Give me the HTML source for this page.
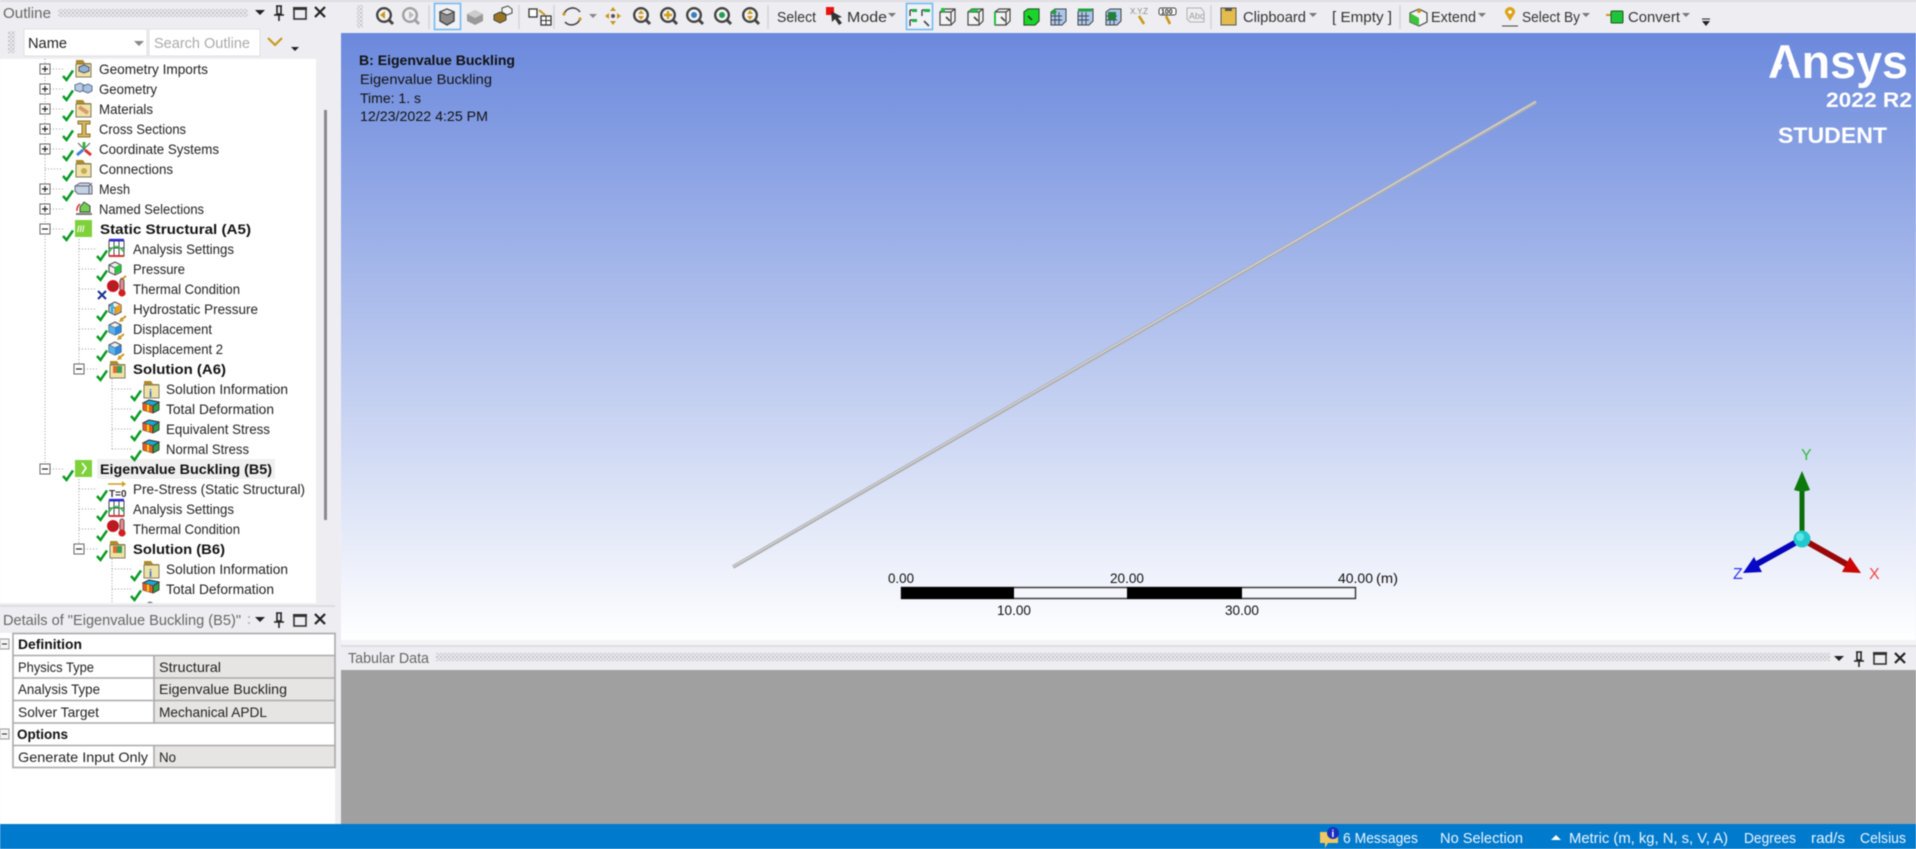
<!DOCTYPE html>
<html lang="en"><head><meta charset="utf-8"><title>Ansys Mechanical</title>
<style>
html,body{margin:0;padding:0;width:1916px;height:849px;overflow:hidden;background:#eeeef2}
svg{display:block;filter:blur(.5px)}
text{font-family:"Liberation Sans",sans-serif;font-size:14px;fill:#222}
.b{font-weight:bold;fill:#111}
.t{fill:#666;font-size:15px}
.v{fill:#111}
.s{fill:#eaf4fc;font-size:15px}
</style></head><body>
<svg width="1916" height="849" viewBox="0 0 1916 849" xmlns="http://www.w3.org/2000/svg">
<defs>
<linearGradient id="vp" x1="0" y1="0" x2="0" y2="1"><stop offset="0" stop-color="#6b89dd"/><stop offset="1" stop-color="#ffffff"/></linearGradient>
<pattern id="dots" width="4" height="4" patternUnits="userSpaceOnUse"><rect width="2" height="2" fill="#c4c4c8"/><rect x="2" y="2" width="2" height="2" fill="#d0d0d4"/></pattern>
<g id="chk"><path d="M0 6 L3.5 10 L10 0.5" fill="none" stroke="#0b9a24" stroke-width="2.5"/></g>
<g id="xx"><path d="M0 1 L8 9 M8 1 L0 9" stroke="#1a2f8f" stroke-width="2"/></g>
<g id="pl"><rect x="-5" y="-5" width="10" height="10" fill="#fff" stroke="#666"/><path d="M-3 0H3M0 -3V3" stroke="#222" stroke-width="1.2"/></g>
<g id="mn"><rect x="-5" y="-5" width="10" height="10" fill="#fff" stroke="#666"/><path d="M-3 0H3" stroke="#222" stroke-width="1.2"/></g>
<g id="fold"><path d="M1 -9H8L10 -6H16V-3H1Z" fill="#b08a28"/><rect x="1" y="-5" width="15" height="13" fill="#f0e2a4" stroke="#7f7a63"/></g>
<g id="cube"><path d="M9 -7L15 -4V3L9 6L3 3V-4Z" fill="#f0f0f0" stroke="#555" stroke-width="1.2"/><path d="M3 -4L9 -1L15 -4M9 -1V6" fill="none" stroke="#555"/></g>
<g id="cubeb"><path d="M1 -7 L6 -9 L10 -7 L10 -2 L6 0 L1 -2Z" fill="#b9cbe4" stroke="#5a6f90"/><path d="M9 -6 L14 -8 L18 -6 L18 -1 L14 1 L9 -1Z" fill="#a9c0e0" stroke="#5a6f90"/></g>
<g id="res"><path d="M1 -5 L7 -8 L17 -6 L17 2 L11 5 L1 2Z" fill="#2aa14a" stroke="#444"/><path d="M1 -5L11 -2L17 -6 L7 -8Z" fill="#18a8d8" stroke="#333"/><path d="M1 -5 L11 -2 L11 5 L1 2Z" fill="#e85a1c"/><path d="M6 -3.500V3.500" stroke="#f0d020" stroke-width="2"/><path d="M11 -2V5" stroke="#333"/></g>
<g id="as"><path d="M1 -8H16V7H1Z" fill="#fff" stroke="#444"/><path d="M6 -8V7M11 -8V7M1 -1H16" stroke="#444"/><path d="M1 -9H16" stroke="#2a2ae0" stroke-width="2.4"/><path d="M1 7H16" stroke="#e03030" stroke-width="2"/><path d="M1 3Q8 -8 16 3" fill="none" stroke="#2dbe4a" stroke-width="1.6"/></g>
<g id="th"><circle cx="6" cy="-2" r="6" fill="#cc1122"/><path d="M3 -5L6 -2L9 -5M6 -2V2" stroke="#551" stroke-width=".8" fill="none"/><rect x="13" y="-9" width="4" height="12" rx="2" fill="#e88" stroke="#555"/><circle cx="15" cy="5" r="3.6" fill="#d02020"/></g>
<g id="sm"><path d="M0 4L5 0" stroke="#c89a2a" stroke-width="2"/><path d="M-2 6L3 5L0 1Z" fill="#c89a2a"/></g>
<g id="mag"><path d="M4 4L9 9" stroke="#444" stroke-width="3"/><circle cx="0" cy="0" r="6.800" fill="#f4f4f4" stroke="#444" stroke-width="2.400"/></g>
<g id="tri"><path d="M-4 -2H4L0 2Z" fill="#777"/></g>
<g id="tb"><path d="M-7 -5L-3 -8H8V4L4 8H-7Z" fill="#f4f4f4" stroke="#444" stroke-width="1.2"/><path d="M-7 -5H4V8M4 -5L8 -8" fill="none" stroke="#444" stroke-width="1.2"/><path d="M-1 0L3 4" stroke="#444" stroke-width="1.6"/></g>
<g id="gr"><path d="M-7 -5L-3 -8H8V4L4 8H-7Z" fill="#a9c7ea" stroke="#444"/><path d="M-3 -5V8M1 -5V8M-7 -1H4M-7 3H4" stroke="#445" stroke-width=".9"/></g>
</defs>

<!-- base -->
<rect width="1916" height="849" fill="#eeeef2"/>
<rect y="0" width="1916" height="2" fill="#dcdce2"/>
<!-- viewport -->
<rect x="341" y="33" width="1575" height="607" fill="url(#vp)"/>
<!-- tree -->
<rect x="0" y="59" width="316" height="544" fill="#fff"/>
<rect x="316" y="59" width="19" height="544" fill="#eeeef2"/>
<rect x="324" y="110" width="3" height="410" fill="#8a8a8a"/>
<rect x="97" y="459" width="178" height="20" fill="#f0f0f0"/>

<!-- outline title -->
<text class="t" x="3" y="18" textLength="48" lengthAdjust="spacingAndGlyphs">Outline</text>
<rect x="58" y="9" width="190" height="8" fill="url(#dots)"/>
<path d="M255 10H265L260 15Z" fill="#222"/>
<path d="M276 6H282M277 6V14H281V6M274 15H284M279 15V21" fill="none" stroke="#222" stroke-width="1.6"/>
<rect x="294" y="8" width="12" height="11" fill="none" stroke="#333" stroke-width="1.6"/><rect x="293" y="7" width="14" height="3" fill="#333"/>
<path d="M315 7L325 17M325 7L315 17" stroke="#222" stroke-width="2.2"/>
<rect x="8" y="31" width="7" height="22" fill="url(#dots)"/>
<rect x="24" y="29" width="123" height="27" fill="#fff" stroke="#e0e0e4"/>
<text x="28" y="48" style="font-size:15px" textLength="39" lengthAdjust="spacingAndGlyphs">Name</text>
<path d="M134 41H144L139 46Z" fill="#888"/>
<rect x="149" y="29" width="111" height="27" fill="#fff" stroke="#e0e0e4"/>
<text x="154" y="48" style="font-size:15px;fill:#aaa" textLength="96" lengthAdjust="spacingAndGlyphs">Search Outline</text>
<path d="M268 38L275 45L282 38" fill="none" stroke="#c99a1c" stroke-width="2.2"/>
<path d="M291 47H299L295 51Z" fill="#222"/>

<!-- tree lines -->
<g stroke="#999" stroke-dasharray="1 2" fill="none">
<path d="M45 59V464M79 230V364M112 379V449M79 479V544M112 559V603"/>
<path d="M50 69H63M50 89H63M50 109H63M50 129H63M50 149H63M45 169H63M50 189H63M50 209H63M50 229H63M50 469H63"/>
<path d="M79 249H97M79 269H97M79 289H97M79 309H97M79 329H97M79 349H97M84 369H97M112 389H131M112 409H131M112 429H131M112 449H131"/>
<path d="M79 489H97M79 509H97M79 529H97M84 549H97M112 569H131M112 589H131"/>
</g>
<g>
<use href="#pl" x="45" y="69"/><use href="#pl" x="45" y="89"/><use href="#pl" x="45" y="109"/><use href="#pl" x="45" y="129"/><use href="#pl" x="45" y="149"/><use href="#pl" x="45" y="189"/><use href="#pl" x="45" y="209"/>
<use href="#mn" x="45" y="229"/><use href="#mn" x="79" y="369"/><use href="#mn" x="45" y="469"/><use href="#mn" x="79" y="549"/>
<use href="#chk" x="63" y="70"/><use href="#chk" x="63" y="90"/><use href="#chk" x="63" y="110"/><use href="#chk" x="63" y="130"/><use href="#chk" x="63" y="150"/><use href="#chk" x="63" y="170"/><use href="#chk" x="63" y="190"/><use href="#chk" x="63" y="230"/><use href="#chk" x="63" y="470"/>
<use href="#chk" x="97" y="250"/><use href="#chk" x="97" y="270"/><use href="#xx" x="98" y="290"/><use href="#chk" x="97" y="310"/><use href="#chk" x="97" y="330"/><use href="#chk" x="97" y="350"/><use href="#chk" x="97" y="370"/>
<use href="#chk" x="131" y="390"/><use href="#chk" x="131" y="410"/><use href="#chk" x="131" y="430"/><use href="#chk" x="131" y="450"/>
<use href="#chk" x="97" y="490"/><use href="#chk" x="97" y="510"/><use href="#chk" x="97" y="530"/><use href="#chk" x="97" y="550"/><use href="#chk" x="131" y="570"/><use href="#chk" x="131" y="590"/>
</g>
<!-- tree icons -->
<use href="#fold" x="75" y="69"/><path d="M79 67L84 65L89 67V71L84 73L79 71Z" fill="#8fb0d8" stroke="#556"/>
<use href="#cubeb" x="74" y="92"/>
<use href="#fold" x="75" y="109"/><path d="M79 107L88 113" stroke="#d99a6a" stroke-width="4"/>
<path d="M78 121H90V124H86V134H90V137H78V134H82V124H78Z" fill="#d8b656" stroke="#8a7434"/>
<path d="M78 143L90 155M90 143L78 155" stroke="#555"/><path d="M84 142V148" stroke="#2bbd3c" stroke-width="3"/><path d="M83 150L77 155" stroke="#3a7fe0" stroke-width="3"/><path d="M85 150L91 155" stroke="#e03030" stroke-width="3"/>
<use href="#fold" x="75" y="169"/><circle cx="84" cy="171" r="3" fill="#c9a94e"/>
<path d="M75 186L80 183H89L92 186V194H78L75 191Z" fill="#c3d1e4" stroke="#667"/><path d="M75 186H89L92 183M89 186V194" fill="none" stroke="#667"/>
<path d="M84 202L90 206V212H80V207Z" fill="#6fd052" stroke="#444"/><path d="M76 214H92" stroke="#777" stroke-width="2"/><path d="M80 204A8 8 0 0 0 77 211" stroke="#e03030" fill="none" stroke-width="1.5"/>
<rect x="75" y="220" width="17" height="17" fill="#7ed13b"/><text x="77" y="232" style="font-size:9px;fill:#fff;font-weight:bold">///</text>
<use href="#as" x="108" y="249"/>
<use href="#cube" x="106" y="269"/><path d="M115 267L121 264V271L115 274Z" fill="#23c43e"/><use href="#sm" x="121" y="276"/>
<use href="#th" x="107" y="288"/>
<use href="#cube" x="106" y="309"/><path d="M115 307L121 304V311L115 314Z" fill="#e8a020"/><path d="M112 304V313" stroke="#3fb0e0" stroke-width="3"/><use href="#sm" x="121" y="316"/>
<use href="#cube" x="106" y="329"/><path d="M109 325L115 328V335L109 332Z" fill="#5db0ea"/><path d="M115 328L121 325V332L115 335Z" fill="#2a8be0"/><use href="#sm" x="119" y="334"/>
<use href="#cube" x="106" y="349"/><path d="M109 345L115 348V355L109 352Z" fill="#5db0ea"/><path d="M115 348L121 345V352L115 355Z" fill="#2a8be0"/><use href="#sm" x="119" y="354"/>
<use href="#fold" x="109" y="370"/><rect x="113" y="366" width="9" height="7" fill="#35a05a"/><rect x="113" y="366" width="4" height="7" fill="#e06a2a"/>
<use href="#fold" x="143" y="390"/><text x="149" y="397" style="font-size:11px;fill:#2a6fd0;font-weight:bold">i</text>
<use href="#res" x="142" y="408"/><use href="#res" x="142" y="428"/><use href="#res" x="142" y="448"/>
<rect x="75" y="460" width="17" height="17" fill="#7ed13b"/><path d="M82 463L86 468L82 474" fill="none" stroke="#fff" stroke-width="1.6"/>
<path d="M108 484H125" stroke="#c9a020" stroke-width="1.6"/><path d="M122 481L126 484L122 487Z" fill="#c9a020"/><text x="109" y="497" style="font-size:10px;font-weight:bold;fill:#333">T=0</text>
<use href="#as" x="108" y="509"/>
<use href="#th" x="107" y="528"/>
<use href="#fold" x="109" y="550"/><rect x="113" y="546" width="9" height="7" fill="#35a05a"/><rect x="113" y="546" width="4" height="7" fill="#e06a2a"/>
<use href="#fold" x="143" y="570"/><text x="149" y="577" style="font-size:11px;fill:#2a6fd0;font-weight:bold">i</text>
<use href="#res" x="142" y="588"/>
<path d="M147 603Q150 600 153 603Z" fill="#777"/>

<!-- tree text -->
<text x="99" y="74" textLength="109" lengthAdjust="spacingAndGlyphs">Geometry Imports</text>
<text x="99" y="94" textLength="58" lengthAdjust="spacingAndGlyphs">Geometry</text>
<text x="99" y="114" textLength="54" lengthAdjust="spacingAndGlyphs">Materials</text>
<text x="99" y="134" textLength="87" lengthAdjust="spacingAndGlyphs">Cross Sections</text>
<text x="99" y="154" textLength="120" lengthAdjust="spacingAndGlyphs">Coordinate Systems</text>
<text x="99" y="174" textLength="74" lengthAdjust="spacingAndGlyphs">Connections</text>
<text x="99" y="194" textLength="31" lengthAdjust="spacingAndGlyphs">Mesh</text>
<text x="99" y="214" textLength="105" lengthAdjust="spacingAndGlyphs">Named Selections</text>
<text class="b" x="100" y="234" textLength="151" lengthAdjust="spacingAndGlyphs">Static Structural (A5)</text>
<text x="133" y="254" textLength="101" lengthAdjust="spacingAndGlyphs">Analysis Settings</text>
<text x="133" y="274" textLength="52" lengthAdjust="spacingAndGlyphs">Pressure</text>
<text x="133" y="294" textLength="107" lengthAdjust="spacingAndGlyphs">Thermal Condition</text>
<text x="133" y="314" textLength="125" lengthAdjust="spacingAndGlyphs">Hydrostatic Pressure</text>
<text x="133" y="334" textLength="79" lengthAdjust="spacingAndGlyphs">Displacement</text>
<text x="133" y="354" textLength="90" lengthAdjust="spacingAndGlyphs">Displacement 2</text>
<text class="b" x="133" y="374" textLength="93" lengthAdjust="spacingAndGlyphs">Solution (A6)</text>
<text x="166" y="394" textLength="122" lengthAdjust="spacingAndGlyphs">Solution Information</text>
<text x="166" y="414" textLength="108" lengthAdjust="spacingAndGlyphs">Total Deformation</text>
<text x="166" y="434" textLength="104" lengthAdjust="spacingAndGlyphs">Equivalent Stress</text>
<text x="166" y="454" textLength="83" lengthAdjust="spacingAndGlyphs">Normal Stress</text>
<text class="b" x="100" y="474" textLength="172" lengthAdjust="spacingAndGlyphs">Eigenvalue Buckling (B5)</text>
<text x="133" y="494" textLength="172" lengthAdjust="spacingAndGlyphs">Pre-Stress (Static Structural)</text>
<text x="133" y="514" textLength="101" lengthAdjust="spacingAndGlyphs">Analysis Settings</text>
<text x="133" y="534" textLength="107" lengthAdjust="spacingAndGlyphs">Thermal Condition</text>
<text class="b" x="133" y="554" textLength="92" lengthAdjust="spacingAndGlyphs">Solution (B6)</text>
<text x="166" y="574" textLength="122" lengthAdjust="spacingAndGlyphs">Solution Information</text>
<text x="166" y="594" textLength="108" lengthAdjust="spacingAndGlyphs">Total Deformation</text>

<!-- details panel -->
<rect x="0" y="605" width="335" height="2" fill="#dcdce2"/>
<text class="t" x="3" y="625" textLength="238" lengthAdjust="spacingAndGlyphs">Details of "Eigenvalue Buckling (B5)"</text>
<rect x="248" y="616" width="2" height="2" fill="#bbb"/><rect x="248" y="622" width="2" height="2" fill="#bbb"/>
<path d="M255 617H265L260 622Z" fill="#222"/>
<path d="M276 613H282M277 613V621H281V613M274 622H284M279 622V628" fill="none" stroke="#222" stroke-width="1.6"/>
<rect x="294" y="615" width="12" height="11" fill="none" stroke="#333" stroke-width="1.6"/><rect x="293" y="614" width="14" height="3" fill="#333"/>
<path d="M315 614L325 624M325 614L315 624" stroke="#222" stroke-width="2.2"/>
<rect x="0" y="633" width="335" height="191" fill="#fff"/>
<rect x="335" y="633" width="6" height="191" fill="#eeeef2"/>
<rect x="154" y="655" width="181" height="68" fill="#e6e5e3"/>
<rect x="154" y="746" width="181" height="22" fill="#e6e5e3"/>
<g fill="none" stroke="#aaa" stroke-width="1.6">
<rect x="13" y="633.5" width="322" height="134"/>
<path d="M13 655.5H335M13 678H335M13 700.5H335M13 723H335M13 745.5H335M154 655.5V723M154 745.5V768"/>
</g>
<rect x="0" y="639" width="9" height="10" fill="#f4f4f4" stroke="#999"/><path d="M2 644H7" stroke="#222"/>
<rect x="0" y="729" width="9" height="10" fill="#f4f4f4" stroke="#999"/><path d="M2 734H7" stroke="#222"/>
<text class="b" x="18" y="649" textLength="64" lengthAdjust="spacingAndGlyphs">Definition</text>
<text x="18" y="672" textLength="76" lengthAdjust="spacingAndGlyphs">Physics Type</text>
<text x="159" y="672" textLength="62" lengthAdjust="spacingAndGlyphs">Structural</text>
<text x="18" y="694" textLength="82" lengthAdjust="spacingAndGlyphs">Analysis Type</text>
<text x="159" y="694" textLength="128" lengthAdjust="spacingAndGlyphs">Eigenvalue Buckling</text>
<text x="18" y="717" textLength="81" lengthAdjust="spacingAndGlyphs">Solver Target</text>
<text x="159" y="717" textLength="108" lengthAdjust="spacingAndGlyphs">Mechanical APDL</text>
<text class="b" x="17" y="739" textLength="51" lengthAdjust="spacingAndGlyphs">Options</text>
<text x="18" y="762" textLength="130" lengthAdjust="spacingAndGlyphs">Generate Input Only</text>
<text x="159" y="762" textLength="17" lengthAdjust="spacingAndGlyphs">No</text>

<!-- toolbar -->
<rect x="357" y="5" width="6" height="23" fill="url(#dots)"/>
<use href="#mag" x="384" y="15"/><path d="M380 15L385 11V19Z" fill="#c89a1c"/>
<g opacity=".45"><use href="#mag" x="410" y="15"/></g><path d="M414 15L409 11V19Z" fill="#bbb"/>
<path d="M429 5V29M519 5V29M554 5V29M768 5V29M1211 5V29M1400 5V29" stroke="#d4d4d8" stroke-width="1.5"/>
<rect x="434.500" y="3.500" width="26" height="26" fill="#f0f2f6" stroke="#6ab7f5" stroke-width="1.5"/>
<path d="M447 9L454 12V21L447 25L440 21V12Z" fill="#8a8a8a" stroke="#444" stroke-width="1.4"/><path d="M440 12L447 15L454 12L447 9Z" fill="#ddd" stroke="#444"/>
<path d="M475 10L483 14V21L475 25L467 21V14Z" fill="#999"/><path d="M467 14L475 18L483 14L475 10Z" fill="#ccc"/>
<path d="M494 15L500 12L506 15V20L500 23L494 20Z" fill="#9a7420" stroke="#444"/><path d="M502 8L508 6L512 9V13L507 15L502 12Z" fill="#f4f4f4" stroke="#444"/>
<rect x="529" y="9" width="8" height="8" fill="#fff" stroke="#333" stroke-width="1.3"/><path d="M539 10L545 15" stroke="#c89a1c" stroke-width="2"/><rect x="541" y="16" width="10" height="9" fill="#fff" stroke="#333" stroke-width="1.3"/><path d="M546 16V25M541 20.500H551" stroke="#333"/>
<path d="M564 14A9 9 0 0 1 580 12M580 19A9 9 0 0 1 565 22" fill="none" stroke="#444" stroke-width="1.6"/><circle cx="564" cy="14" r="1.6" fill="#c89a1c"/><circle cx="580" cy="19" r="1.6" fill="#c89a1c"/>
<path d="M589 14H597L593 18Z" fill="#888"/>
<path d="M613 7L616 11H610ZM613 25L616 21H610ZM605 16L609 13V19ZM621 16L617 13V19Z" fill="#c8961c"/><circle cx="613" cy="16" r="2" fill="#555"/>
<use href="#mag" x="641" y="15"/><path d="M641 10L644 14H638ZM641 20L644 16H638Z" fill="#d09c1c"/>
<use href="#mag" x="668" y="15"/><path d="M664 15H672M668 11V19" stroke="#d09c1c" stroke-width="2.4"/>
<use href="#mag" x="694" y="15"/><circle cx="694" cy="15" r="3" fill="#3a7fc0"/>
<use href="#mag" x="722" y="15"/><circle cx="722" cy="15" r="3" fill="#22a050"/>
<use href="#mag" x="750" y="15"/><path d="M750 10L753 14H747ZM750 20L753 16H747Z" fill="#d09c1c"/>
<text x="777" y="22" style="font-size:15px;fill:#333" textLength="39" lengthAdjust="spacingAndGlyphs">Select</text>
<rect x="826" y="7" width="8" height="8" fill="#ee1010"/><path d="M831 11L842 17L838 18L842 23L839 25L835 19L832 22Z" fill="#333"/>
<text x="847" y="22" style="font-size:15px;fill:#333" textLength="40" lengthAdjust="spacingAndGlyphs">Mode</text>
<use href="#tri" x="892" y="15"/>
<rect x="906.500" y="3.500" width="26" height="26" fill="#f0f2f6" stroke="#6ab7f5" stroke-width="1.5"/>
<path d="M910 10H917M910 10V16M922 10H929M922 10V16M910 20H917M910 20V26" stroke="#333" stroke-width="1.3" fill="none"/><rect x="912" y="9" width="5" height="3" fill="#22b04a"/><rect x="924" y="9" width="6" height="3" fill="#22b04a"/><rect x="912" y="19" width="5" height="3" fill="#22b04a"/><path d="M924 21L929 26" stroke="#444" stroke-width="1.6"/>
<use href="#tb" x="947" y="17"/><rect x="941" y="8" width="4" height="4" fill="#1fc33c"/>
<use href="#tb" x="975" y="17"/><path d="M968 12L972 9H980L976 12Z" fill="#1fc33c"/>
<use href="#tb" x="1002" y="17"/><path d="M995 12V25" stroke="#1fc33c" stroke-width="2"/>
<use href="#tb" x="1031" y="17"/><path d="M1024 12L1028 9H1039V21L1035 25H1024Z" fill="#19d52a" stroke="#225522"/><path d="M1028 16L1032 20" stroke="#333" stroke-width="1.6"/>
<use href="#gr" x="1058" y="17"/><circle cx="1054" cy="12" r="2.500" fill="#22a040"/>
<use href="#gr" x="1085" y="17"/><path d="M1078 10H1092" stroke="#22a040" stroke-width="3"/>
<use href="#gr" x="1113" y="17"/><rect x="1108" y="12" width="8" height="8" fill="#22803a"/>
<text x="1130" y="14" style="font-size:8px;fill:#888" textLength="18">X.Y.Z</text><path d="M1139 16L1144 24" stroke="#c8961c" stroke-width="2.6"/>
<rect x="1159" y="8" width="17" height="7" rx="2" fill="#fff" stroke="#444"/><text x="1161" y="14" style="font-size:7px;fill:#222;font-weight:bold">100</text><path d="M1166 16L1170 24" stroke="#c8961c" stroke-width="2.6"/>
<g opacity=".4"><path d="M1187 8H1201L1204 12V22H1190L1187 19Z" fill="#eee" stroke="#555"/><text x="1189" y="19" style="font-size:9px">Abc</text></g>
<rect x="1221" y="8" width="15" height="17" fill="#e4bc4c" stroke="#555"/><rect x="1225" y="8" width="7" height="3" fill="#555"/>
<text x="1243" y="22" style="font-size:15px;fill:#333" textLength="63" lengthAdjust="spacingAndGlyphs">Clipboard</text>
<use href="#tri" x="1313" y="15"/>
<text x="1332" y="22" style="font-size:15px;fill:#333" textLength="60" lengthAdjust="spacingAndGlyphs">[ Empty ]</text>
<path d="M1419 9L1427 13V22L1419 26L1410 22V13Z" fill="#f4f4f4" stroke="#444" stroke-width="1.2"/><path d="M1410 13L1419 18V26L1410 22Z" fill="#3cc43c"/><circle cx="1419" cy="11" r="2" fill="#c89a1c"/>
<text x="1431" y="22" style="font-size:15px;fill:#333" textLength="45" lengthAdjust="spacingAndGlyphs">Extend</text>
<use href="#tri" x="1482" y="15"/>
<path d="M1510 7A5 5 0 0 1 1515 13L1510 21L1505 13A5 5 0 0 1 1510 7Z" fill="#dba41c"/><circle cx="1510" cy="12" r="1.8" fill="#fff"/><path d="M1502 26H1518" stroke="#444"/>
<text x="1522" y="22" style="font-size:15px;fill:#333" textLength="58" lengthAdjust="spacingAndGlyphs">Select By</text>
<use href="#tri" x="1586" y="15"/>
<path d="M1606 15H1612" stroke="#c8961c" stroke-width="2"/><rect x="1611" y="11" width="12" height="12" rx="1" fill="#1fc33c" stroke="#225522"/>
<text x="1628" y="22" style="font-size:15px;fill:#333" textLength="52" lengthAdjust="spacingAndGlyphs">Convert</text>
<use href="#tri" x="1686" y="15"/>
<path d="M1702 21H1710L1706 26Z" fill="#222"/><path d="M1702 19H1710" stroke="#222"/>

<!-- viewport text -->
<text x="359" y="65" style="font-weight:bold;fill:#111" textLength="156" lengthAdjust="spacingAndGlyphs">B: Eigenvalue Buckling</text>
<text x="360" y="84" class="v" textLength="132" lengthAdjust="spacingAndGlyphs">Eigenvalue Buckling</text>
<text x="360" y="103" class="v" textLength="61" lengthAdjust="spacingAndGlyphs">Time: 1. s</text>
<text x="360" y="121" class="v" textLength="128" lengthAdjust="spacingAndGlyphs">12/23/2022 4:25 PM</text>

<!-- logo -->
<text x="1768" y="78" style="font-size:47px;font-weight:bold;fill:#fff" textLength="140" lengthAdjust="spacingAndGlyphs">Ansys</text>
<path d="M1785 55L1778 79H1794Z" fill="#738fdf"/>
<text x="1826" y="107" style="font-size:21px;font-weight:bold;fill:#fff" textLength="86" lengthAdjust="spacingAndGlyphs">2022 R2</text>
<text x="1778" y="143" style="font-size:22px;font-weight:bold;fill:#fff" textLength="109" lengthAdjust="spacingAndGlyphs">STUDENT</text>

<!-- beam -->
<line x1="733" y1="567" x2="1536" y2="102" stroke="#adadad" stroke-width="3.8"/>
<line x1="733" y1="566.500" x2="1536" y2="101.500" stroke="#d6d6d6" stroke-width="1.2"/>

<!-- scale -->
<rect x="901.500" y="587.500" width="454" height="11" fill="#f4f6fc" stroke="#333" stroke-width="1.4"/>
<rect x="901" y="587" width="113" height="12" fill="#000"/><rect x="1127" y="587" width="115" height="12" fill="#000"/>
<text x="888" y="583" class="v" textLength="26" lengthAdjust="spacingAndGlyphs">0.00</text>
<text x="1110" y="583" class="v" textLength="34" lengthAdjust="spacingAndGlyphs">20.00</text>
<text x="1338" y="583" class="v" textLength="35" lengthAdjust="spacingAndGlyphs">40.00</text>
<text x="1376" y="583" class="v" textLength="22" lengthAdjust="spacingAndGlyphs">(m)</text>
<text x="997" y="615" class="v" textLength="34" lengthAdjust="spacingAndGlyphs">10.00</text>
<text x="1225" y="615" class="v" textLength="34" lengthAdjust="spacingAndGlyphs">30.00</text>

<!-- triad -->
<path d="M1802 539V488" stroke="#0b6e0b" stroke-width="5"/>
<path d="M1802 471L1810 490Q1802 493 1794 490Z" fill="#0b7a0b"/>
<path d="M1802 539L1848 565" stroke="#9a0808" stroke-width="6"/>
<path d="M1861 573L1842 572L1850 557Z" fill="#cc0606"/>
<path d="M1802 539L1757 564" stroke="#0606b8" stroke-width="6"/>
<path d="M1743 573L1762 572L1754 557Z" fill="#0808c8"/>
<circle cx="1802" cy="539" r="8.500" fill="#22c8cc"/><circle cx="1800" cy="537" r="4" fill="#5fe6e8"/>
<text x="1801" y="460" style="font-size:16px;fill:#35bb45">Y</text>
<text x="1869" y="579" style="font-size:16px;fill:#f04848">X</text>
<text x="1733" y="579" style="font-size:16px;fill:#3535f0">Z</text>

<!-- tabular -->
<rect x="341" y="640" width="1575" height="5" fill="#f4f4f6"/>
<rect x="341" y="645" width="1575" height="25" fill="#eeeef2"/>
<rect x="341" y="645" width="1575" height="2" fill="#dcdce2"/>
<text class="t" x="348" y="663" textLength="81" lengthAdjust="spacingAndGlyphs">Tabular Data</text>
<rect x="436" y="653" width="1394" height="8" fill="url(#dots)"/>
<path d="M1834 656H1844L1839 661Z" fill="#222"/>
<path d="M1856 652H1862M1857 652V660H1861V652M1854 661H1864M1859 661V667" fill="none" stroke="#222" stroke-width="1.6"/>
<rect x="1874" y="653" width="12" height="11" fill="none" stroke="#333" stroke-width="1.6"/><rect x="1873" y="652" width="14" height="3" fill="#333"/>
<path d="M1895 653L1905 663M1905 653L1895 663" stroke="#222" stroke-width="2.2"/>
<rect x="341" y="670" width="1575" height="154" fill="#a0a0a0"/>

<!-- status bar -->
<rect x="0" y="824" width="1916" height="25" fill="#007acc"/>
<path d="M1320 832H1338V843H1328L1325 848V843H1320Z" fill="#f0c860"/><circle cx="1333" cy="833" r="6" fill="#1a2fc0"/><text x="1331.500" y="837" style="font-size:10px;font-weight:bold;fill:#fff">i</text>
<text class="s" x="1343" y="843" textLength="75" lengthAdjust="spacingAndGlyphs">6 Messages</text>
<text class="s" x="1440" y="843" textLength="83" lengthAdjust="spacingAndGlyphs">No Selection</text>
<path d="M1551 840H1561L1556 835Z" fill="#fff"/>
<text class="s" x="1569" y="843" textLength="159" lengthAdjust="spacingAndGlyphs">Metric (m, kg, N, s, V, A)</text>
<text class="s" x="1744" y="843" textLength="52" lengthAdjust="spacingAndGlyphs">Degrees</text>
<text class="s" x="1811" y="843" textLength="34" lengthAdjust="spacingAndGlyphs">rad/s</text>
<text class="s" x="1860" y="843" textLength="46" lengthAdjust="spacingAndGlyphs">Celsius</text>
</svg>
</body></html>
